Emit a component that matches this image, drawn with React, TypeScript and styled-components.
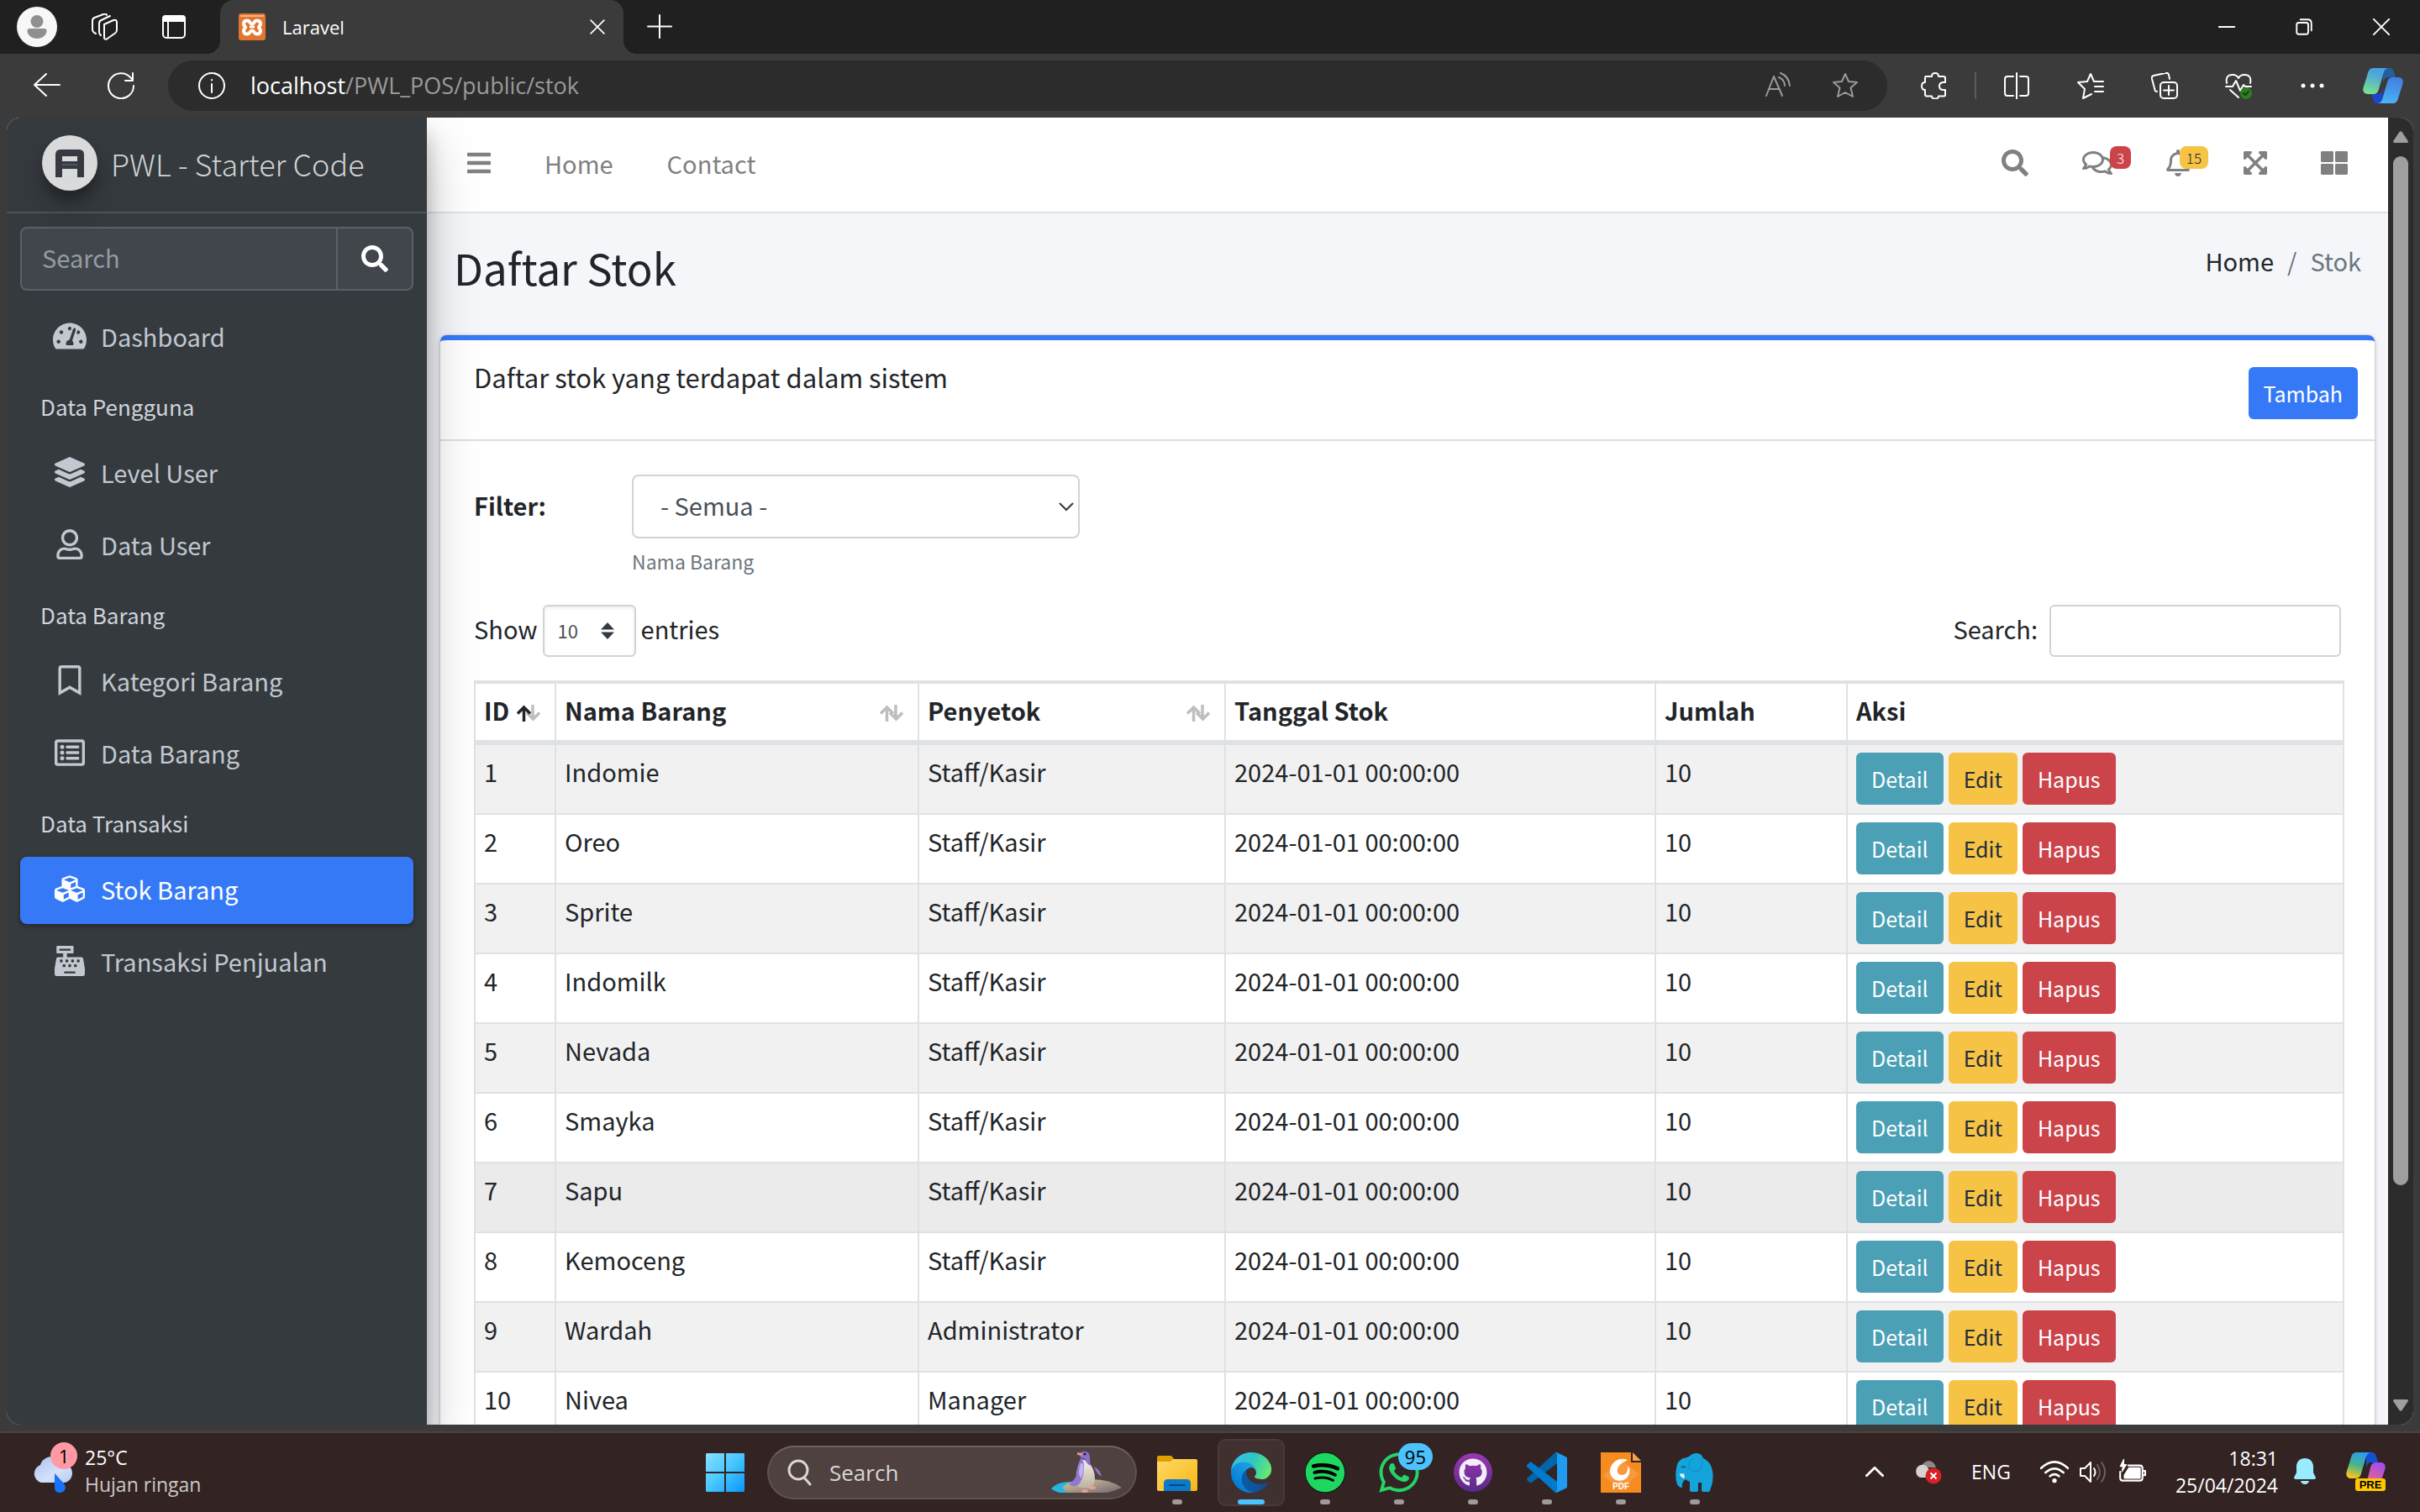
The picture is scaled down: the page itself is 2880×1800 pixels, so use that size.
import React from "react";
import styled, { createGlobalStyle, css } from "styled-components";
import {
  FaBars,
  FaCashRegister,
  FaCubes,
  FaExpandArrowsAlt,
  FaGithub,
  FaLayerGroup,
  FaRegBell,
  FaRegBookmark,
  FaRegComments,
  FaRegListAlt,
  FaRegUser,
  FaSearch,
  FaSpotify,
  FaTachometerAlt,
  FaThLarge,
  FaWhatsapp,
} from "react-icons/fa";

const pageFont = `"Noto Sans CJK SC", "Noto Sans", sans-serif`;
const shellFont = `"Open Sans", "Noto Sans", sans-serif`;

const color = {
  strip: "#202020",
  chrome: "#3b3b3b",
  field: "#2c2c2c",
  sidebar: "#353a3e",
  sidebarField: "#41464d",
  sidebarLine: "#58616a",
  primary: "#3579f7",
  info: "#4ba0b5",
  warning: "#f6c344",
  danger: "#cb444a",
  text: "#212529",
  line: "#dee2e6",
  control: "#ced4da",
  muted: "#808080",
};

const GlobalStyle = createGlobalStyle`
  *, *::before, *::after { box-sizing: border-box; }
  body { margin: 0; background: ${color.strip}; }
  button, input, select { font: inherit; margin: 0; }
  button { border: 0; padding: 0; background: none; color: inherit; }
  a { color: inherit; text-decoration: none; }
  svg { display: block; flex: none; }
`;

/* ---------- Browser window ---------- */

const Desktop = styled.div`
  display: flex;
  flex-direction: column;
  height: 100vh;
  overflow: hidden;
  background: ${color.chrome};
  font-family: ${shellFont};
`;

const TabStrip = styled.div`
  display: flex;
  flex: none;
  height: 64px;
  padding-left: 4px;
  background: ${color.strip};
  color: #fff;
`;

const StripButton = styled.button<{ $width?: number }>`
  display: flex;
  align-items: center;
  justify-content: center;
  flex: none;
  width: ${(p) => p.$width ?? 82}px;
`;

const Tab = styled.div`
  position: relative;
  display: flex;
  align-items: center;
  gap: 20px;
  flex: 0 1 480px;
  margin-left: 14px;
  padding: 0 22px;
  border-radius: 16px 16px 0 0;
  background: ${color.chrome};
  font-size: 22px;
  line-height: 32px;

  &::before,
  &::after {
    content: "";
    position: absolute;
    bottom: 0;
    width: 16px;
    height: 16px;
  }
  &::before {
    left: -16px;
    background: radial-gradient(circle at 0 0, transparent 16px, ${color.chrome} 16px);
  }
  &::after {
    right: -16px;
    background: radial-gradient(circle at 100% 0, transparent 16px, ${color.chrome} 16px);
  }
`;

const TabTitle = styled.span`
  flex: 1;
`;

const WindowButtons = styled.div`
  display: flex;
  margin-left: auto;
`;

const Toolbar = styled.div`
  display: flex;
  align-items: center;
  flex: none;
  height: 76px;
  padding: 0 4px 0 12px;
  color: #fff;
`;

const ToolButton = styled.button<{ $width?: number }>`
  display: flex;
  align-items: center;
  justify-content: center;
  flex: none;
  width: ${(p) => p.$width ?? 88}px;
  height: 60px;
`;

const AddressBar = styled.div`
  display: flex;
  align-items: center;
  flex: 1;
  height: 60px;
  margin: 0 12px;
  padding: 0 10px 0 36px;
  border-radius: 30px;
  background: ${color.field};
  font-size: 27px;
  line-height: 40px;
`;

const Address = styled.div`
  flex: 1;
  padding-left: 30px;
  color: #9a9a9a;

  b {
    font-weight: 400;
    color: #fff;
  }
`;

const FieldButton = styled.button`
  display: flex;
  justify-content: center;
  width: 80px;
  color: #9a9a9a;
`;

const ToolDivider = styled.span`
  width: 2px;
  height: 32px;
  margin: 0 4px;
  background: #5c5c5c;
`;

const Viewport = styled.div`
  display: flex;
  flex: 1;
  min-height: 0;
  margin: 0 8px 8px;
  border-radius: 16px;
  overflow: hidden;
  background: #f4f6f9;
  font-family: ${pageFont};
  font-size: 29px;
  line-height: 44px;
  color: ${color.text};
`;

const ScrollTrack = styled.div`
  display: flex;
  flex-direction: column;
  align-items: center;
  flex: none;
  width: 30px;
  padding: 16px 0;
  background: ${color.field};
`;

const ScrollThumb = styled.div`
  flex: 0 0 calc(80% + 6px);
  width: 18px;
  margin: 16px 0 auto;
  border-radius: 9px;
  background: #9f9f9f;
`;

/* ---------- Sidebar ---------- */

const Sidebar = styled.aside`
  position: relative;
  z-index: 2;
  flex: none;
  width: 500px;
  background: ${color.sidebar};
  box-shadow: 0 28px 56px rgba(0, 0, 0, 0.25), 0 20px 20px rgba(0, 0, 0, 0.22);
`;

const Brand = styled.a`
  display: flex;
  align-items: center;
  gap: 16px;
  height: 114px;
  padding: 0 42px 4px;
  border-bottom: 2px solid #4c545d;
  font-size: 36px;
  font-weight: 300;
  color: #d0d2d3;
  white-space: nowrap;
`;

const BrandLogo = styled.span`
  border-radius: 50%;
  box-shadow: 0 20px 40px rgba(0, 0, 0, 0.19), 0 12px 12px rgba(0, 0, 0, 0.23);
`;

const SidebarSearch = styled.form`
  display: flex;
  height: 76px;
  margin: 16px;
  border: 2px solid ${color.sidebarLine};
  border-radius: 8px;
  background: ${color.sidebarField};

  input {
    flex: 1;
    min-width: 0;
    padding: 0 24px 4px;
    border: 0;
    background: none;
    color: #fff;
  }
  input::placeholder {
    color: #949ba1;
    opacity: 1;
  }
  button {
    display: flex;
    align-items: center;
    justify-content: center;
    width: 90px;
    border-left: 2px solid ${color.sidebarLine};
    color: #fff;
  }
`;

const Menu = styled.nav`
  padding: 0 16px;
`;

const MenuHeader = styled.div`
  height: 76px;
  padding: 14px 24px;
  font-size: 26px;
  color: #d0d4db;
`;

const MenuLink = styled.a<{ $active?: boolean }>`
  display: flex;
  align-items: center;
  height: 80px;
  margin-bottom: 6px;
  padding: 0 32px 4px;
  border-radius: 8px;
  color: #c2c7d0;
  white-space: nowrap;
  ${(p) =>
    p.$active &&
    css`
      background: ${color.primary};
      color: #fff;
      box-shadow: 0 2px 6px rgba(0, 0, 0, 0.12), 0 2px 4px rgba(0, 0, 0, 0.24);
    `}
`;

const MenuIcon = styled.span`
  display: flex;
  justify-content: center;
  width: 54px;
  margin-right: 10px;

  svg {
    width: 40px;
    height: 36px;
  }
`;

/* ---------- Page ---------- */

const Main = styled.main`
  flex: 1;
  min-width: 0;
  overflow: hidden;
`;

const Navbar = styled.header`
  display: flex;
  align-items: center;
  height: 114px;
  padding: 0 16px;
  border-bottom: 2px solid ${color.line};
  background: #fff;
  color: ${color.muted};
`;

const NavLink = styled.a<{ $icon?: number }>`
  position: relative;
  display: flex;
  align-items: center;
  height: 80px;
  padding: 0 32px 4px;

  svg {
    width: ${(p) => p.$icon ?? 32}px;
    height: 32px;
  }
`;

const NavEnd = styled.div`
  display: flex;
  margin-left: auto;
`;

const NavBadge = styled.span<{ $tone: "danger" | "warning" }>`
  position: absolute;
  top: 18px;
  right: 10px;
  padding: 4px 8px;
  border-radius: 8px;
  background: ${(p) => color[p.$tone]};
  color: ${(p) => (p.$tone === "danger" ? "#fff" : color.text)};
  font-size: 17px;
  font-weight: 300;
  line-height: 19px;
`;

const ContentHeader = styled.div`
  display: flex;
  align-items: flex-start;
  justify-content: space-between;
  padding: 30px 32px 47px;
`;

const PageTitle = styled.h1`
  margin: 0;
  font-size: 51px;
  font-weight: 400;
  line-height: 68px;
`;

const Breadcrumb = styled.nav`
  display: flex;
  gap: 16px;
  padding-top: 4px;
  color: #6c757d;

  a {
    color: ${color.text};
  }
`;

const Card = styled.section`
  margin: 0 16px;
  border-top: 6px solid ${color.primary};
  border-radius: 8px;
  background: #fff;
  box-shadow: 0 0 2px rgba(0, 0, 0, 0.25), 0 2px 6px rgba(0, 0, 0, 0.2);
`;

const CardHeader = styled.div`
  display: flex;
  justify-content: space-between;
  padding: 24px 20px 24px 40px;
  border-bottom: 2px solid #dfdfdf;
`;

const CardTitle = styled.h2`
  margin: 0;
  font-size: 31px;
  font-weight: 400;
  line-height: 40px;
`;

const tones = {
  primary: [color.primary, "#fff"],
  info: [color.info, "#fff"],
  warning: [color.warning, "#1f2d3d"],
  danger: [color.danger, "#fff"],
} as const;

const Button = styled.button<{ $tone: keyof typeof tones }>`
  height: 62px;
  padding: 0 18px;
  border-radius: 6px;
  background: ${(p) => tones[p.$tone][0]};
  color: ${(p) => tones[p.$tone][1]};
  font-size: 25px;
  line-height: 42px;
`;

const CardTools = styled.div`
  padding-top: 8px;
`;

const CardBody = styled.div`
  padding: 40px 36px 40px 40px;
`;

const FilterRow = styled.div`
  display: flex;
  margin-bottom: 33px;

  label {
    width: 188px;
    font-weight: 700;
    line-height: 72px;
  }
  small {
    display: block;
    margin-top: 8px;
    font-size: 23px;
    line-height: 38px;
    color: #6c757d;
  }
`;

const SelectBox = styled.span<{ $inset: number }>`
  position: relative;
  display: block;

  svg {
    position: absolute;
    top: 0;
    bottom: 0;
    right: ${(p) => p.$inset}px;
    margin: auto 0;
    pointer-events: none;
  }
`;

const Select = styled.select`
  appearance: none;
  display: block;
  width: 533px;
  height: 76px;
  padding: 0 32px 4px;
  border: 2px solid ${color.control};
  border-radius: 8px;
  background: #fff;
  color: #495057;
`;

const SmallSelect = styled(Select)`
  width: 111px;
  height: 62px;
  padding: 0 16px 2px;
  border-radius: 6px;
  box-shadow: inset 0 2px 4px rgba(0, 0, 0, 0.075);
  font-size: 22px;
`;

const TableTools = styled.div`
  display: flex;
  justify-content: space-between;
  margin-bottom: 28px;
  padding-right: 4px;

  label {
    display: flex;
    align-items: flex-start;
    gap: 6px;
    line-height: 56px;
  }
`;

const SearchInput = styled.input`
  width: 347px;
  height: 62px;
  margin-left: 8px;
  padding: 0 16px;
  border: 2px solid ${color.control};
  border-radius: 6px;
  background: #fff;
`;

const Table = styled.table`
  width: 100%;
  border-spacing: 0;
  table-layout: fixed;
  border-right: 2px solid ${color.line};

  th,
  td {
    border-left: 2px solid ${color.line};
    padding: 9px 10px 10px;
    text-align: left;
    vertical-align: top;
    white-space: nowrap;
  }
  th {
    padding-bottom: 14px;
    border-top: 4px solid ${color.line};
    border-bottom: 6px solid ${color.line};
    font-weight: 700;
  }
  td {
    border-bottom: 2px solid ${color.line};
  }
`;

const Row = styled.tr<{ $hover?: boolean }>`
  &:nth-child(odd) {
    background: #f1f1f1;
  }
  ${(p) => p.$hover && "&&:nth-child(odd) { background: #ebebeb; }"}
`;

const HeadCell = styled.div`
  display: flex;
  align-items: center;
  justify-content: space-between;

  svg {
    margin: 8px 7px 0 0;
  }
`;

const Actions = styled.div`
  display: flex;
  gap: 6px;
`;

/* ---------- Taskbar ---------- */

const Taskbar = styled.footer`
  display: grid;
  grid-template-columns: 1fr auto 1fr;
  flex: none;
  height: 96px;
  border-top: 2px solid #4c4341;
  background: #332323;
  color: #fff;
  font-size: 23px;
  line-height: 32px;
`;

const Weather = styled.div`
  display: flex;
  align-items: center;
  gap: 9px;
  padding: 0 0 4px 38px;
`;

const WeatherIcon = styled.span`
  position: relative;
  width: 54px;
  height: 64px;
  padding-top: 14px;
`;

const CountBadge = styled.span<{ $tone: string }>`
  position: absolute;
  top: -2px;
  right: 0;
  min-width: 32px;
  height: 32px;
  padding: 0 8px;
  border-radius: 16px;
  background: ${(p) => p.$tone};
  color: #000;
  font-size: 22px;
  line-height: 32px;
  text-align: center;
`;

const Muted = styled.div`
  color: #cdc8c8;
`;

const Dock = styled.div`
  display: flex;
  align-items: center;
`;

const DockButton = styled.button<{ $active?: boolean }>`
  position: relative;
  display: flex;
  align-items: center;
  justify-content: center;
  width: 80px;
  height: 80px;
  margin: 0 4px;
  border-radius: 10px;
  ${(p) =>
    p.$active &&
    css`
      background: #403130;
      box-shadow: inset 0 0 0 2px #483a39;
    `}
`;

const Running = styled.span<{ $active?: boolean }>`
  position: absolute;
  bottom: 2px;
  left: 50%;
  width: ${(p) => (p.$active ? 32 : 12)}px;
  height: 6px;
  transform: translateX(-50%);
  border-radius: 3px;
  background: ${(p) => (p.$active ? "#4cc2ff" : "#a29a9a")};
`;

const DockBadge = styled(CountBadge)`
  top: 5px;
`;

const DockSearch = styled.button`
  display: flex;
  align-items: center;
  width: 440px;
  height: 64px;
  margin: 0 4px 0 6px;
  padding: 0 14px 0 20px;
  border: 2px solid #61514f;
  border-top-color: #706261;
  border-radius: 32px;
  background: #4e4140;
  color: #d9d5d5;
  font-size: 26px;

  span {
    flex: 1;
    padding-left: 20px;
    text-align: left;
  }
`;

const Tray = styled.div`
  display: flex;
  align-items: center;
  justify-content: flex-end;
  gap: 35px;
  padding: 0 40px 2px 0;
`;

const TrayGroup = styled.div<{ $gap: number }>`
  display: flex;
  align-items: center;
  gap: ${(p) => p.$gap}px;
`;

const Clock = styled.div`
  text-align: right;
`;

/* ---------- Drawings ---------- */

const Line = ({
  size = 32,
  width = 2,
  children,
}: {
  size?: number;
  width?: number;
  children: React.ReactNode;
}) => (
  <svg
    width={size}
    height={size}
    viewBox="0 0 32 32"
    fill="none"
    stroke="currentColor"
    strokeWidth={width}
    strokeLinecap="round"
    strokeLinejoin="round"
    aria-hidden="true"
  >
    {children}
  </svg>
);

const Avatar = () => (
  <svg width="48" height="48" viewBox="0 0 48 48">
    <circle cx="24" cy="24" r="24" fill="#f7f7f7" />
    <circle cx="24" cy="17.500" r="7.500" fill="#8f8f8f" />
    <path d="M15 26h18q2.500 0 2.500 2.500C35.500 34 30 38 24 38s-11.500-4-11.500-9.500Q12.500 26 15 26z" fill="#8f8f8f" />
  </svg>
);

const Favicon = () => (
  <svg width="32" height="32" viewBox="0 0 32 32">
    <rect width="32" height="32" rx="3" fill="#e2762d" />
    <path d="M2 2h28v2H2z" fill="#f3b488" />
    <path
      d="M10 8.500c4 0 3 4 6 4s2-4 6-4c3 0 4 2 4 4 0 2.500-2 2.500-2 4s2 1.500 2 4c0 2-1 4-4 4-4 0-3-4-6-4s-2 4-6 4c-3 0-4-2-4-4 0-2.500 2-2.500 2-4s-2-1.500-2-4c0-2 1-4 4-4z"
      fill="none"
      stroke="#fff"
      strokeWidth="4"
    />
    <path d="M13 16h6" stroke="#fff" strokeWidth="3" />
  </svg>
);

const Copilot = ({ id, stops }: { id: string; stops: [string, string, string, string] }) => (
  <svg width="48" height="42" viewBox="0 0 48 42">
    <defs>
      <linearGradient id={`${id}a`} x1="0.600" y1="0" x2="0.300" y2="1">
        <stop offset="0.200" stopColor={stops[0]} />
        <stop offset="1" stopColor={stops[1]} />
      </linearGradient>
      <linearGradient id={`${id}b`} x1="0.600" y1="0" x2="0.400" y2="1">
        <stop offset="0" stopColor={stops[2]} />
        <stop offset="1" stopColor={stops[3]} />
      </linearGradient>
    </defs>
    <path d="M24 0h7c4 0 5 2 6 5l2 6h-8c-5 0-6 3-7 7z" fill="#235f9e" />
    <path d="M24 42h-7c-4 0-4-2-5-5l-2-6h8c4 0 5-3 6-7z" fill="#1f45c8" />
    <path d="M13 0h18c-5 0-6 4-7 8l-5 17c-1 4-3 6-7 6H6c-5 0-7-4-5-9L6 6C7 2 9 0 13 0z" fill={`url(#${id}a)`} />
    <path d="M35 42H17c5 0 6-4 7-8l5-17c1-4 3-6 7-6h6c5 0 7 4 5 9l-5 16c-1 4-3 6-7 6z" fill={`url(#${id}b)`} />
  </svg>
);

const BrandMark = () => (
  <svg width="66" height="66" viewBox="0 0 66 66">
    <circle cx="33" cy="33" r="33" fill="#d9dadc" />
    <path
      fillRule="evenodd"
      d="M22 17h22q6 0 6 6v27h-8V40H24v10h-8V23q0-6 6-6zM24 25v6h18v-6z"
      fill="#343a40"
    />
    <path d="M24 35h18" stroke="#6b7075" strokeWidth="1" />
  </svg>
);

const Chevron = () => (
  <svg width="20" height="12" viewBox="0 0 20 12" fill="none" stroke="#343a40" strokeWidth="2">
    <path d="M2 2l8 8 8-8" />
  </svg>
);

const UpDown = () => (
  <svg width="16" height="20" viewBox="0 0 16 20" fill="#343a40">
    <path d="M8 0l8 8.500H0zM8 20l8-8.500H0z" />
  </svg>
);

const SortArrows = ({ asc }: { asc?: boolean }) => (
  <svg width="28" height="20" viewBox="0 0 28 20" fill="none" strokeWidth="3.500">
    <path d="M19 0v17M12 9.500l7.500 7.500 7.500-7.500" stroke="#bdbebf" />
    <path d="M8.500 20V3M1 10.500L8.500 3l7.500 7.500" stroke={asc ? "#212529" : "#bdbebf"} />
  </svg>
);

const ScrollArrow = ({ down }: { down?: boolean }) => (
  <svg width="18" height="14" viewBox="0 0 18 14" fill="#9f9f9f">
    <path
      d={
        down
          ? "M1 0h16q1.500 1 .5 2.500l-7 10.500q-1.500 1.500-3 0L.5 2.500Q-.5 1 1 0z"
          : "M1 14h16q1.500-1 .5-2.500L10.500 1q-1.500-1.500-3 0L.5 11.500Q-.5 13 1 14z"
      }
    />
  </svg>
);

const Cloud = () => (
  <svg width="52" height="46" viewBox="0 0 52 46">
    <defs>
      <linearGradient id="cloud" x1="0" y1="0" x2="1" y2="1">
        <stop offset="0" stopColor="#a9c0f2" />
        <stop offset="0.600" stopColor="#d5e1f8" />
        <stop offset="1" stopColor="#b4c8f1" />
      </linearGradient>
    </defs>
    <path d="M11 32a11 11 0 0 1-1-21C12 4 18 1 25 1c7 0 12 4 14 9 6 1 9 6 9 11s-4 11-10 11z" fill="url(#cloud)" />
    <path d="M27 21l11 12c4 5 1 11-5 11-4 0-6-3-6-6z" fill="#1673fa" />
  </svg>
);

const WindowsLogo = () => (
  <svg width="46" height="46" viewBox="0 0 46 46">
    <defs>
      <linearGradient id="win" gradientUnits="userSpaceOnUse" x1="0" y1="0" x2="46" y2="46">
        <stop offset="0" stopColor="#8be0ff" />
        <stop offset="0.500" stopColor="#45c6ff" />
        <stop offset="1" stopColor="#0a97fb" />
      </linearGradient>
    </defs>
    <path d="M1 0h21v22H0V1zM24 0h21l1 1v21H24zM0 24h22v22H1l-1-1zM24 24h22v21l-1 1H24z" fill="url(#win)" />
  </svg>
);

const Penguin = () => (
  <svg width="86" height="52" viewBox="0 0 86 52">
    <defs>
      <linearGradient id="sand" x1="0" y1="0" x2="1" y2="1">
        <stop offset="0" stopColor="#d9cc98" />
        <stop offset="1" stopColor="#736377" />
      </linearGradient>
      <linearGradient id="belly" x1="0.500" y1="0" x2="0.500" y2="1">
        <stop offset="0" stopColor="#f4f1ec" />
        <stop offset="1" stopColor="#b9b1a0" />
      </linearGradient>
    </defs>
    <path d="M0 45q8-8 24-8v13H10q-7-2-10-5z" fill="#28b4e2" />
    <path d="M14 43q8-9 34-9 22 0 36 10-9 4-18 6H20q-6-3-6-7z" fill="url(#sand)" />
    <path d="M33 44q-4-8-3-16 1-10 6-18l8 3q8 9 8 20 0 8-6 12z" fill="url(#belly)" />
    <path d="M34 5q2-5 7-4 5 1 5 7 0 6 1 10-5-2-7-8l-5-2z" fill="#8a6fce" />
    <path d="M36 8q-5 8-5 16 0 9-10 16 8 5 13-1 6-10 5-24z" fill="#8f78d2" />
    <path d="M35 15q-4 10 0 18 5-8 3-18z" fill="#c0b1ee" />
    <path d="M51 19q8 4 9 12-4-2-7-7z" fill="#8a75c4" />
    <path d="M31 2l6 1v3l-6-1z" fill="#d99a94" />
    <circle cx="40" cy="4" r="1.500" fill="#222" />
    <ellipse cx="49" cy="44" rx="4" ry="2" fill="#e8a08f" />
    <ellipse cx="40" cy="48" rx="4" ry="2" fill="#e8a08f" />
  </svg>
);

const Folder = () => (
  <svg width="48" height="48" viewBox="0 0 48 48">
    <defs>
      <linearGradient id="folder" x1="0" y1="0" x2="1" y2="1">
        <stop offset="0" stopColor="#ffd968" />
        <stop offset="1" stopColor="#f8b711" />
      </linearGradient>
    </defs>
    <path d="M2 4h15l4 5v8H0V6q0-2 2-2z" fill="#e0a000" />
    <path d="M0 11h16l3-3h27q2 0 2 2v34q0 2-2 2H2q-2 0-2-2z" fill="url(#folder)" />
    <path d="M8 46V37q0-5 5-5h22q5 0 5 5v9z" fill="#0d79c9" />
    <path d="M15 39h18" stroke="#06498a" strokeWidth="2" strokeLinecap="round" />
  </svg>
);

const Edge = () => (
  <svg width="48" height="48" viewBox="0 0 256 256">
    <defs>
      <linearGradient id="edgeDark" x1="0.200" y1="0.500" x2="1" y2="0.500">
        <stop offset="0" stopColor="#0c59a4" />
        <stop offset="1" stopColor="#114a8b" />
      </linearGradient>
      <linearGradient id="edgeBlue" x1="0.800" y1="0.300" x2="0.300" y2="1">
        <stop offset="0" stopColor="#1b9de2" />
        <stop offset="1" stopColor="#0078d4" />
      </linearGradient>
      <linearGradient id="edgeTeal" x1="0" y1="0.300" x2="1" y2="0.600">
        <stop offset="0" stopColor="#35c1f1" />
        <stop offset="0.500" stopColor="#2ec6c0" />
        <stop offset="1" stopColor="#66eb6e" />
      </linearGradient>
    </defs>
    <path
      d="M231 190.500c-3.400 1.800-6.900 3.400-10.500 4.700-11.500 4.300-23.600 6.500-35.900 6.500-47.300 0-88.500-32.500-88.500-74.300.1-11.400 6.400-21.900 16.400-27.300-42.800 1.800-53.800 46.400-53.800 72.500 0 73.900 68.100 81.400 82.800 81.400 7.900 0 19.800-2.300 27-4.600l1.300-.4c27.600-9.500 51-28.100 66.600-52.800 1.200-1.900.6-4.300-1.200-5.500-1.300-.8-2.900-.9-4.200-.2z"
      fill="url(#edgeDark)"
    />
    <path
      d="M105.700 241.400c-8.900-5.500-16.600-12.800-22.700-21.300-26.300-36-18.400-86.500 17.600-112.800 3.800-2.700 7.700-5.200 11.900-7.200 3.100-1.500 8.400-4.100 15.500-4 10.100.1 19.600 4.900 25.700 13 4 5.400 6.300 11.900 6.400 18.700 0-.2 24.500-79.600-80-79.600-43.900 0-80 41.700-80 78.200-.2 19.300 4 38.500 12.100 56 27.600 58.800 94.800 87.600 156.400 67.100-21.100 6.600-44.100 3.700-62.900-8.100z"
      fill="url(#edgeBlue)"
    />
    <path
      d="M152.300 148.900c-.8 1-3.300 2.500-3.300 5.700 0 2.600 1.700 5.200 4.800 7.300 14.400 10.100 41.700 8.700 41.800 8.700 10.700 0 21.300-2.900 30.500-8.400 18.800-11 30.400-31.100 30.400-52.900.3-22.400-8-37.300-11.300-43.900C223.900 23.900 177.700 0 127.400 0 56.700 0-.7 56.800 0 127.500c.5-36.500 36.800-66 80-66 3.500 0 23.500.3 42 10.100 16.300 8.600 24.900 18.900 30.800 29.200 6.200 10.700 7.300 24.100 7.300 29.500s-2.700 12.300-7.800 18.600z"
      fill="url(#edgeTeal)"
    />
  </svg>
);

const Spotify = styled.span`
  border-radius: 50%;
  background: #000;
  color: #1ed760;

  svg {
    width: 48px;
    height: 48px;
  }
`;

const WhatsApp = styled(FaWhatsapp)`
  width: 54px;
  height: 54px;
  color: #25d366;
`;

const GithubDisc = styled.span`
  display: flex;
  align-items: center;
  justify-content: center;
  width: 46px;
  height: 46px;
  border-radius: 50%;
  background: linear-gradient(#9a38b5, #5a2a86);
  color: #f2edf6;

  svg {
    width: 34px;
    height: 34px;
  }
`;

const VsCode = () => (
  <svg width="48" height="48" viewBox="0 0 100 100">
    <path
      d="M96.500 10.800L75.900.9C73.500-.3 70.600.2 68.800 2.100L1.300 63.600c-1.800 1.600-1.800 4.500 0 6.100l5.500 5c1.500 1.400 3.700 1.500 5.300.3l81.300-61.600c2.700-2.100 6.600-.1 6.600 3.300v-.3c0-2.400-1.400-4.600-3.500-5.600z"
      fill="#0065a9"
    />
    <path
      d="M96.500 89.200l-20.600 9.900c-2.400 1.200-5.300.7-7.100-1.200L1.300 36.400c-1.800-1.600-1.800-4.500 0-6.100l5.500-5c1.500-1.400 3.700-1.500 5.300-.3l81.300 61.600c2.700 2.100 6.600.1 6.600-3.300v.3c0 2.400-1.400 4.600-3.500 5.600z"
      fill="#007acc"
    />
    <path
      d="M75.900 99.100c-2.400 1.200-5.300.7-7.100-1.200 2.300 2.300 6.200.7 6.200-2.600V4.700c0-3.300-3.900-4.900-6.200-2.600 1.800-1.900 4.700-2.400 7.100-1.200l20.600 9.900c2.100 1 3.500 3.200 3.500 5.600v67.200c0 2.400-1.400 4.600-3.500 5.600z"
      fill="#1f9cf0"
    />
  </svg>
);

const Foxit = () => (
  <svg width="48" height="48" viewBox="0 0 48 48">
    <path d="M0 0h36v12h12v36H0z" fill="#f68b1f" />
    <path d="M38 0l10 10H38z" fill="#f9a04a" />
    <path d="M24 8l21 18-21 18L3 28z" fill="#f9a04a" opacity="0.700" />
    <path
      d="M32 9q-8-3-14 1c-9 6-9 17-2 22 7 4 16 1 18-7 1-4 0-7-2-9 1 7-2 11-7 11-4 0-6-3-5-7 1-5 6-8 12-11z"
      fill="#fff"
    />
    <text x="24" y="44" textAnchor="middle" fontFamily="Liberation Sans, sans-serif" fontWeight="700" fontSize="10" fill="#fff">
      PDF
    </text>
  </svg>
);

const Elephant = () => (
  <svg width="48" height="48" viewBox="0 0 48 48">
    <path
      d="M17 5q4-4 9-4 6 0 8 6 9 4 11 15 2 12-3 23 0 2-3 2h-5q-2 0-2-2v-9h-4v9q0 2-2 2h-5q-3 0-3-2V35q-3-1-5-3-5 3-4 10-4 0-6-4-3-8-1-19 1-9 8-12 3 0 7-2z"
      fill="#15a3dc"
    />
    <path d="M23 7q-8 3-6 12 6 6 13 2 5-6 2-14" fill="none" stroke="#0f93cc" strokeWidth="1.500" />
    <path d="M6 25q0 5 6 6l-1-6q-3 1-5 0z" fill="#e9f4fa" />
    <path d="M8 18q3-2 5 0" fill="none" stroke="#075b85" strokeWidth="1.500" />
  </svg>
);

/* ---------- Data ---------- */

const stock = [
  ["Indomie", "Staff/Kasir"],
  ["Oreo", "Staff/Kasir"],
  ["Sprite", "Staff/Kasir"],
  ["Indomilk", "Staff/Kasir"],
  ["Nevada", "Staff/Kasir"],
  ["Smayka", "Staff/Kasir"],
  ["Sapu", "Staff/Kasir"],
  ["Kemoceng", "Staff/Kasir"],
  ["Wardah", "Administrator"],
  ["Nivea", "Manager"],
];

const menu = [
  { title: "", items: [["Dashboard", FaTachometerAlt]] },
  { title: "Data Pengguna", items: [["Level User", FaLayerGroup], ["Data User", FaRegUser]] },
  { title: "Data Barang", items: [["Kategori Barang", FaRegBookmark], ["Data Barang", FaRegListAlt]] },
  { title: "Data Transaksi", items: [["Stok Barang", FaCubes], ["Transaksi Penjualan", FaCashRegister]] },
] as { title: string; items: [string, React.ComponentType][] }[];

const starPath = "M16 2l4 9 10 1-7.500 6.500L25 29l-9-5-9 5 2.500-10.500L2 12l10-1z";

export default function App() {
  return (
    <Desktop>
      <GlobalStyle />

      <TabStrip>
        <StripButton aria-label="Profile" $width={80}>
          <Avatar />
        </StripButton>
        <StripButton aria-label="Workspaces">
          <Line>
            <path d="M15 13l11-5q4-1 4 2.500V20q0 2-2 3.500l-10 7q-3 1-3-2zM11 26q-2-1-2-4V12q0-3 2.500-4L22 3M5 24q-4-2-4-5V9q0-3 2.500-4L14 1q4-1 4 1" />
          </Line>
        </StripButton>
        <StripButton aria-label="Tab actions">
          <Line>
            <rect x="3" y="3" width="26" height="26" rx="4" />
            <path d="M3 9V6q0-3 3-3h20q3 0 3 3v3z" fill="currentColor" />
            <path d="M9 9v20" />
          </Line>
        </StripButton>
        <Tab>
          <Favicon />
          <TabTitle>Laravel</TabTitle>
          <button aria-label="Close tab">
            <Line size={18} width={3}>
              <path d="M2 2l28 28M30 2L2 30" />
            </Line>
          </button>
        </Tab>
        <StripButton aria-label="New tab" $width={86}>
          <Line width={2}>
            <path d="M16 2v27M2 15.500h28" />
          </Line>
        </StripButton>
        <WindowButtons>
          <StripButton aria-label="Minimize" $width={92}>
            <Line size={20} width={3}>
              <path d="M1 16h30" />
            </Line>
          </StripButton>
          <StripButton aria-label="Restore" $width={92}>
            <Line size={20} width={3}>
              <rect x="2" y="8" width="22" height="22" rx="4" />
              <path d="M9 2h14q7 0 7 7v14" />
            </Line>
          </StripButton>
          <StripButton aria-label="Close" $width={92}>
            <Line size={20} width={3}>
              <path d="M1 1l30 30M31 1L1 31" />
            </Line>
          </StripButton>
        </WindowButtons>
      </TabStrip>

      <Toolbar>
        <ToolButton aria-label="Back">
          <Line>
            <path d="M15 2L1 15l14 13M1 15h30" />
          </Line>
        </ToolButton>
        <ToolButton aria-label="Refresh">
          <Line>
            <path d="M31 16A15 15 0 1 1 27.500 6.500L30 9M30 1v9h-9" />
          </Line>
        </ToolButton>
        <AddressBar>
          <Line>
            <circle cx="16" cy="16" r="15" />
            <path d="M16 14v10M16 9v.5" />
          </Line>
          <Address>
            <b>localhost</b>/PWL_POS/public/stok
          </Address>
          <FieldButton aria-label="Read aloud">
            <Line>
              <path d="M2 28L11 5l10 23M5 20h13M17 6q7 3 7 10M19 1q10 4 11 15" />
            </Line>
          </FieldButton>
          <FieldButton aria-label="Add to favorites">
            <Line>
              <path d={starPath} />
            </Line>
          </FieldButton>
        </AddressBar>
        <ToolButton aria-label="Extensions">
          <Line>
            <path d="M6 5h7q0-4 4-4t4 4h6q2 0 2 2v5h-2q-5 0-5 4.500t5 4.500h2v6q0 1.500-2 1.500h-6q0 3-4 3t-4-3H7q-2 0-2-2V21q-4 0-4-4.500T5 12V7q0-2 1-2z" />
          </Line>
        </ToolButton>
        <ToolDivider />
        <ToolButton aria-label="Split screen">
          <Line>
            <path d="M12 5H5Q2 5 2 8v17q0 3 3 3h7M20 5h7q3 0 3 3v17q0 3-3 3h-7M16 1v31" />
          </Line>
        </ToolButton>
        <ToolButton aria-label="Favorites">
          <Line>
            <path d="M17 26L7 31l2-11-8-8 11-1 4-9 4 9h11M21 17h10M21 23h10" />
          </Line>
        </ToolButton>
        <ToolButton aria-label="Collections">
          <Line>
            <rect x="11" y="12" width="20" height="19" rx="4" />
            <path d="M21 16v11M15 21.500h12M7 23q-2 0-2.500-2L1 8q-1-3 2-4l14-3q3-1 4 2l1 5" />
          </Line>
        </ToolButton>
        <ToolButton aria-label="Browser essentials">
          <Line>
            <path d="M2 13Q0 3 9 3q5 0 7 4 2-4 7-4 9 0 7 10M1 17h8l4-7 5 12 4-7 2 2h7M6 21l10 9" />
            <circle cx="25" cy="25" r="7" fill="#2e7d1f" stroke="none" />
            <path d="M22 25l2 2 4-4" stroke="#173f10" />
          </Line>
        </ToolButton>
        <ToolButton aria-label="Settings and more">
          <Line>
            <g fill="currentColor" stroke="none">
              <circle cx="5" cy="16" r="2.500" />
              <circle cx="16" cy="16" r="2.500" />
              <circle cx="27" cy="16" r="2.500" />
            </g>
          </Line>
        </ToolButton>
        <ToolButton aria-label="Copilot" $width={80}>
          <Copilot id="bar" stops={["#4aa3df", "#7be08f", "#3f7fe0", "#4cb4f7"]} />
        </ToolButton>
      </Toolbar>

      <Viewport>
        <Sidebar>
          <Brand href="#">
            <BrandLogo>
              <BrandMark />
            </BrandLogo>
            PWL - Starter Code
          </Brand>
          <SidebarSearch onSubmit={(e) => e.preventDefault()}>
            <input type="search" placeholder="Search" aria-label="Search menu" />
            <button aria-label="Search">
              <FaSearch size={32} />
            </button>
          </SidebarSearch>
          <Menu>
            {menu.map((group) => (
              <div key={group.title}>
                {group.title && <MenuHeader>{group.title}</MenuHeader>}
                {group.items.map(([label, Icon]) => (
                  <MenuLink key={label} href="#" $active={label === "Stok Barang"}>
                    <MenuIcon>
                      <Icon />
                    </MenuIcon>
                    {label}
                  </MenuLink>
                ))}
              </div>
            ))}
          </Menu>
        </Sidebar>

        <Main>
          <Navbar>
            <NavLink href="#" aria-label="Toggle menu" $icon={28}>
              <FaBars />
            </NavLink>
            <NavLink href="#">Home</NavLink>
            <NavLink href="#">Contact</NavLink>
            <NavEnd>
              <NavLink href="#" aria-label="Search">
                <FaSearch />
              </NavLink>
              <NavLink href="#" aria-label="Messages" $icon={36}>
                <FaRegComments />
                <NavBadge $tone="danger">3</NavBadge>
              </NavLink>
              <NavLink href="#" aria-label="Notifications" $icon={28}>
                <FaRegBell />
                <NavBadge $tone="warning">15</NavBadge>
              </NavLink>
              <NavLink href="#" aria-label="Fullscreen" $icon={28}>
                <FaExpandArrowsAlt />
              </NavLink>
              <NavLink href="#" aria-label="Control sidebar">
                <FaThLarge />
              </NavLink>
            </NavEnd>
          </Navbar>

          <ContentHeader>
            <PageTitle>Daftar Stok</PageTitle>
            <Breadcrumb aria-label="Breadcrumb">
              <a href="#">Home</a>
              <span>/</span>
              <span>Stok</span>
            </Breadcrumb>
          </ContentHeader>

          <Card>
            <CardHeader>
              <CardTitle>Daftar stok yang terdapat dalam sistem</CardTitle>
              <CardTools>
                <Button $tone="primary">Tambah</Button>
              </CardTools>
            </CardHeader>
            <CardBody>
              <FilterRow>
                <label htmlFor="barang">Filter:</label>
                <div>
                  <SelectBox $inset={6}>
                    <Select id="barang">
                      <option>- Semua -</option>
                    </Select>
                    <Chevron />
                  </SelectBox>
                  <small>Nama Barang</small>
                </div>
              </FilterRow>

              <TableTools>
                <label>
                  Show
                  <SelectBox $inset={26}>
                    <SmallSelect>
                      <option>10</option>
                    </SmallSelect>
                    <UpDown />
                  </SelectBox>
                  entries
                </label>
                <label>
                  Search:
                  <SearchInput type="search" />
                </label>
              </TableTools>

              <Table>
                <colgroup>
                  <col width="96" />
                  <col width="432" />
                  <col width="365" />
                  <col width="512" />
                  <col width="228" />
                  <col />
                </colgroup>
                <thead>
                  <tr>
                    <th>
                      <HeadCell>
                        ID <SortArrows asc />
                      </HeadCell>
                    </th>
                    <th>
                      <HeadCell>
                        Nama Barang <SortArrows />
                      </HeadCell>
                    </th>
                    <th>
                      <HeadCell>
                        Penyetok <SortArrows />
                      </HeadCell>
                    </th>
                    <th>Tanggal Stok</th>
                    <th>Jumlah</th>
                    <th>Aksi</th>
                  </tr>
                </thead>
                <tbody>
                  {stock.map(([item, person], index) => (
                    <Row key={item} $hover={item === "Sapu"}>
                      <td>{index + 1}</td>
                      <td>{item}</td>
                      <td>{person}</td>
                      <td>2024-01-01 00:00:00</td>
                      <td>10</td>
                      <td>
                        <Actions>
                          <Button $tone="info">Detail</Button>
                          <Button $tone="warning">Edit</Button>
                          <Button $tone="danger">Hapus</Button>
                        </Actions>
                      </td>
                    </Row>
                  ))}
                </tbody>
              </Table>
            </CardBody>
          </Card>
        </Main>

        <ScrollTrack>
          <ScrollArrow />
          <ScrollThumb />
          <ScrollArrow down />
        </ScrollTrack>
      </Viewport>

      <Taskbar>
        <Weather>
          <WeatherIcon>
            <Cloud />
            <CountBadge $tone="#ff99a4">1</CountBadge>
          </WeatherIcon>
          <div>
            <div>25°C</div>
            <Muted>Hujan ringan</Muted>
          </div>
        </Weather>

        <Dock>
          <DockButton aria-label="Start">
            <WindowsLogo />
          </DockButton>
          <DockSearch>
            <Line>
              <circle cx="15" cy="13" r="11" strokeWidth="3" />
              <path d="M22 22l7 8" strokeWidth="3" />
            </Line>
            <span>Search</span>
            <Penguin />
          </DockSearch>
          <DockButton aria-label="File Explorer">
            <Folder />
            <Running />
          </DockButton>
          <DockButton aria-label="Edge" $active>
            <Edge />
            <Running $active />
          </DockButton>
          <DockButton aria-label="Spotify">
            <Spotify>
              <FaSpotify />
            </Spotify>
            <Running />
          </DockButton>
          <DockButton aria-label="WhatsApp">
            <WhatsApp />
            <DockBadge $tone="#4cc2ff">95</DockBadge>
            <Running />
          </DockButton>
          <DockButton aria-label="GitHub Desktop">
            <GithubDisc>
              <FaGithub />
            </GithubDisc>
            <Running />
          </DockButton>
          <DockButton aria-label="Visual Studio Code">
            <VsCode />
            <Running />
          </DockButton>
          <DockButton aria-label="Foxit PDF Reader">
            <Foxit />
            <Running />
          </DockButton>
          <DockButton aria-label="Laragon">
            <Elephant />
            <Running />
          </DockButton>
        </Dock>

        <Tray>
          <Line size={22} width={4}>
            <path d="M2 23L16 9l14 14" />
          </Line>
          <svg width="34" height="30" viewBox="0 0 34 30">
            <path d="M10 8q3-6 9-6 6 1 8 8H12z" fill="#8f8888" />
            <path d="M8 22a8 8 0 0 1 1-15q5-1 8 3l8 12z" fill="#d6d2d2" />
            <circle cx="24" cy="20" r="9.500" fill="#d92027" />
            <path d="M20.500 16.500l7 7m0-7l-7 7" stroke="#fff" strokeWidth="2" />
          </svg>
          <span>ENG</span>
          <TrayGroup $gap={13}>
            <Line size={34}>
              <path d="M1 12q15-14 30 0M6 17q10-9 20 0M11 21q5-4 10 0" strokeWidth="2.500" />
              <circle cx="16" cy="26" r="1.500" fill="currentColor" />
            </Line>
            <Line>
              <path d="M1 12h5l7-7v23l-7-7H1zM17 12q3 4.500 0 9" />
              <path d="M21 8q6 8.500 0 17M26 5q8 11.500 0 23" stroke="#6b5f5f" />
            </Line>
            <Line size={34}>
              <path d="M12 9h13q3 0 3 3v11q0 3-3 3H6q-3 0-3-3v-7M28 15h3v5h-3" />
              <path d="M8 20l5-8h12v11H8z" fill="currentColor" />
              <path d="M7 2L3 10h3l-1 6 5-8H7z" fill="currentColor" strokeWidth="1" />
            </Line>
          </TrayGroup>
          <TrayGroup $gap={18}>
            <Clock>
              <div>18:31</div>
              <div>25/04/2024</div>
            </Clock>
            <svg width="28" height="32" viewBox="0 0 28 32" fill="#99ebff">
              <path d="M14 0c6 0 10 4 10 10v7l3 6q0 2-2 2H3q-2 0-2-2l3-6v-7C4 4 8 0 14 0zM9 27h10q-1 4-5 4t-5-4z" />
            </svg>
          </TrayGroup>
          <svg width="48" height="46" viewBox="0 0 48 46">
            <defs>
              <linearGradient id="preA" x1="0.600" y1="0" x2="0.300" y2="1">
                <stop offset="0" stopColor="#2c9cf0" />
                <stop offset="0.500" stopColor="#43b58a" />
                <stop offset="1" stopColor="#ffc61a" />
              </linearGradient>
              <linearGradient id="preB" x1="0.700" y1="0" x2="0.300" y2="1">
                <stop offset="0" stopColor="#a04df0" />
                <stop offset="1" stopColor="#ff6a6a" />
              </linearGradient>
            </defs>
            <path d="M24 0h6c4 0 5 2 6 5l2 7h-8c-4 0-5 3-6 7z" fill="#1450d2" />
            <path d="M13 0h17c-4 0-6 4-7 8l-5 17c-1 4-3 6-7 6H6c-5 0-7-4-5-9L6 6C7 2 9 0 13 0z" fill="url(#preA)" />
            <path d="M34 42H18c4 0 6-4 7-8l4-16c1-4 3-6 7-6h5c5 0 7 4 5 9l-5 15c-1 4-3 6-7 6z" fill="url(#preB)" />
            <rect x="11" y="31" width="36" height="15" rx="3" fill="#ffc800" />
            <text x="29" y="43" textAnchor="middle" fontFamily="Liberation Sans, sans-serif" fontWeight="700" fontSize="13" fill="#000">
              PRE
            </text>
          </svg>
        </Tray>
      </Taskbar>
    </Desktop>
  );
}
